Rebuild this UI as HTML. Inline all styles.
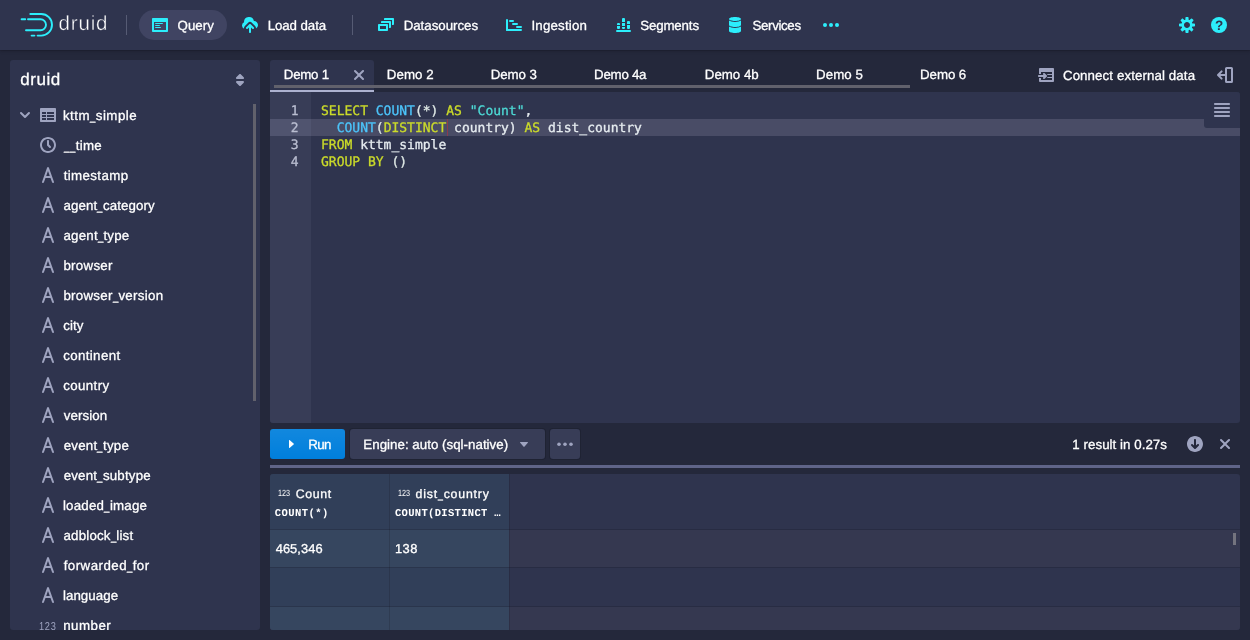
<!DOCTYPE html>
<html lang="en"><head><meta charset="utf-8"><title>Apache Druid</title>
<style>
html,body{margin:0;padding:0}
body{width:1250px;height:640px;overflow:hidden;background:#24283b;position:relative;font-family:"Liberation Sans",sans-serif;font-size:13.3px;color:#fff;text-rendering:geometricPrecision}
.t{position:absolute;white-space:pre;line-height:1;-webkit-text-stroke:0.3px currentColor}
.ic{position:absolute;display:block;overflow:visible}
.mono{font-family:"Liberation Mono",monospace;-webkit-text-stroke:0}
.u{display:inline-block;font-style:normal;width:5.700px;transform:scaleX(.72);transform-origin:0 0;letter-spacing:0}
.num{font-family:"Liberation Sans",sans-serif;-webkit-text-stroke:0}
#hdr{position:absolute;left:0;top:0;width:1250px;height:50px;background:#2f344e;box-shadow:0 0 0 1px rgba(16,18,26,.12),0 1px 3px rgba(16,18,26,.35)}
.vdiv{position:absolute;top:15px;width:1px;height:20px;background:#565b74}
#qbtn{position:absolute;left:139px;top:10px;width:88px;height:30px;border-radius:15px;background:#404462}
#side{position:absolute;left:10px;top:60px;width:250px;height:570px;border-radius:3px;background:#2f344e}
#tree{position:absolute;left:0;top:0;width:260px;height:630px;overflow:hidden}
.sb{position:absolute;background:#61616c}
#tab1{position:absolute;left:270px;top:60px;width:104px;height:32px;border-radius:3px 3px 0 0;background:#2f344e}
#tabline{position:absolute;left:270px;top:90px;width:104px;height:2px;background:#adb2d0}
#ed{position:absolute;left:270px;top:92px;width:970px;height:331px;background:#2f344e;border-radius:0 3px 3px 3px;overflow:hidden}
#gut{position:absolute;left:0;top:0;width:41px;height:331px;background:#383d57}
#al{position:absolute;left:41px;top:27px;width:929px;height:17px;background:#494c66}
#alg{position:absolute;left:0;top:27px;width:41px;height:17px;background:#50546f}
#cur{position:absolute;left:177px;top:27px;width:1px;height:17px;background:#8a3b4c}
#menu{position:absolute;left:934px;top:0;width:36px;height:36px;background:#2f344e;border-radius:0 0 0 3px}
.cl,.ln{-webkit-text-stroke:0.3px currentColor}
.cl{position:absolute;left:321px;margin:0;font-family:"DejaVu Sans Mono","Liberation Mono",monospace;font-size:13px;line-height:17px;height:17px;white-space:pre}
.ln{position:absolute;left:270px;width:28.500px;text-align:right;margin:0;font-family:"DejaVu Sans Mono","Liberation Mono",monospace;font-size:13px;line-height:17px;color:#b9bdd0}
#run{position:absolute;left:270px;top:429px;width:75px;height:30px;border-radius:3px;background:#007fdc linear-gradient(to bottom,rgba(255,255,255,.07),rgba(255,255,255,0))}
#eng{position:absolute;left:350px;top:429px;width:195px;height:30px;border-radius:3px;background:#383d57;box-shadow:0 0 0 1px rgba(16,18,26,.25)}
#more{position:absolute;left:550px;top:429px;width:30px;height:30px;border-radius:3px;background:#383d57;box-shadow:0 0 0 1px rgba(16,18,26,.25)}
#split{position:absolute;left:270px;top:465px;width:970px;height:3px;background:#5f6488}
#tbl{position:absolute;left:270px;top:474px;width:970px;height:156px;background:#2f344e;border-radius:3px;overflow:hidden}
#tbl div{position:absolute}
#tbl .hl{left:0;top:0;width:239px;height:156px;background:#313f59}
#tbl .r1{left:0;top:56px;width:970px;height:37px;background:#353850}
#tbl .r1h{left:0;top:56px;width:239px;height:37px;background:#36465f}
#tbl .r3{left:0;top:133px;width:970px;height:23px;background:#353850}
#tbl .r3h{left:0;top:133px;width:239px;height:23px;background:#36465f}
#tbl .hb{left:0;width:970px;height:1px;background:rgba(18,20,32,.22)}
#tbl .vb{top:0;width:1px;height:156px;background:rgba(18,20,32,.2)}
.logo{-webkit-text-stroke:0.4px #2f344e}
#w{position:absolute;left:0;top:0;width:1250px;height:640px;will-change:transform}
</style></head>
<body>
<div id="w">
<div id="hdr"></div>
<svg class="ic" style="left:16px;top:8px" width="44" height="34" viewBox="0 0 44 34"><g fill="none" stroke="#2ceefb" stroke-width="1.9" stroke-linecap="round"><path d="M14.3,6 H25.2 A10.8,10.8 0 0 1 25.2,27.6 H21.6"/><path d="M15.6,27.6 H18.4"/><path d="M12,11.3 H24.5 A5.5,5.5 0 0 1 24.5,22.3 H10"/><path d="M5.6,11.3 H9.2"/></g></svg>
<span id="t1" class="t logo" style="left:58.50px;top:14.19px;font-size:20.5px;color:#fff;letter-spacing:0.860px;">druid</span>
<div class="vdiv" style="left:126px"></div><div class="vdiv" style="left:352px"></div>
<div id="qbtn"></div>
<svg class="ic" style="left:152px;top:17px" width="16" height="16" viewBox="0 0 16 16"><path fill="#2ceefb" fill-rule="evenodd" d="M3.5 7h7c.28 0 .5-.22.5-.5s-.22-.5-.5-.5h-7c-.28 0-.5.22-.5.5s.22.5.5.5zM15 1H1c-.55 0-1 .45-1 1v12c0 .55.45 1 1 1h14c.55 0 1-.45 1-1V2c0-.55-.45-1-1-1zm-1 12H2V5h12v8zM3.5 9h4c.28 0 .5-.22.5-.5S7.78 8 7.5 8h-4c-.28 0-.5.22-.5.5s.22.5.5.5zm0 2h5c.28 0 .5-.22.5-.5s-.22-.5-.5-.5h-5c-.28 0-.5.22-.5.5s.22.5.5.5z"/></svg>
<span id="t2" class="t " style="left:177.53px;top:18.71px;font-size:13.3px;color:#fff;letter-spacing:0.018px;">Query</span>
<svg class="ic" style="left:242px;top:17px" width="16" height="16" viewBox="0 0 16 16"><path fill="#2ceefb" fill-rule="evenodd" d="M8.71 7.29C8.53 7.11 8.28 7 8 7s-.53.11-.71.29l-3 3a1.003 1.003 0 001.42 1.42L7 10.41V15c0 .55.45 1 1 1s1-.45 1-1v-4.59l1.29 1.29c.18.19.43.3.71.3a1.003 1.003 0 00.71-1.71l-3-3zM12 4c-.03 0-.07 0-.1.01A5 5 0 002 5c0 .11.01.22.02.33a3.495 3.495 0 00.07 6.37c-.05-.23-.09-.46-.09-.7 0-.83.34-1.58.88-2.12l3-3a2.993 2.993 0 014.24 0l3 3c.54.54.88 1.29.88 2.12 0 .16-.02.32-.05.47C15.17 10.78 16 9.5 16 8c0-2.21-1.79-4-4-4z"/></svg>
<span id="t3" class="t " style="left:267.68px;top:18.60px;font-size:13.3px;color:#fff;letter-spacing:-0.086px;">Load data</span>
<svg class="ic" style="left:378px;top:17px" width="16" height="16" viewBox="0 0 16 16"><path fill="#2ceefb" fill-rule="evenodd" d="M12 3.98H4c-.55 0-1 .45-1 1v1h8v5h1c.55 0 1-.45 1-1v-5c0-.55-.45-1-1-1zm3-3H7c-.55 0-1 .45-1 1v1h8v5h1c.55 0 1-.45 1-1v-5c0-.55-.45-1-1-1zm-6 6H1c-.55 0-1 .45-1 1v5c0 .55.45 1 1 1h8c.55 0 1-.45 1-1v-5c0-.55-.45-1-1-1zm-1 5H2v-3h6v3z"/></svg>
<span id="t4" class="t " style="left:403.63px;top:18.60px;font-size:13.3px;color:#fff;letter-spacing:-0.016px;">Datasources</span>
<svg class="ic" style="left:506px;top:17px" width="16" height="16" viewBox="0 0 16 16"><g fill="#2ceefb"><rect x="0" y="2" width="2" height="12" rx="1"/><rect x="0" y="12" width="16" height="2" rx="1"/><rect x="3" y="3" width="5" height="2" rx="1"/><rect x="6" y="6" width="6" height="2" rx="1"/><rect x="10" y="9" width="6" height="2" rx="1"/></g></svg>
<span id="t5" class="t " style="left:531.45px;top:18.65px;font-size:13.3px;color:#fff;letter-spacing:0.198px;">Ingestion</span>
<svg class="ic" style="left:615px;top:17px" width="16" height="16" viewBox="0 0 16 16"><path fill="#2ceefb" d="M2 8V7a1 1 0 0 1 1 -1H4a1 1 0 0 1 1 1V8z M2 9V11a1 1 0 0 0 1 1H4a1 1 0 0 0 1 -1V9z M7 5V2a1 1 0 0 1 1 -1H9a1 1 0 0 1 1 1V5z M7 6h3v3h-3z M7 10V11a1 1 0 0 0 1 1H9a1 1 0 0 0 1 -1V10z M12 7V5a1 1 0 0 1 1 -1H14a1 1 0 0 1 1 1V7z M12 8V11a1 1 0 0 0 1 1H14a1 1 0 0 0 1 -1V8z"/><rect x="1" y="13" width="15" height="2" rx="1" fill="#2ceefb"/></svg>
<span id="t6" class="t " style="left:640.18px;top:18.60px;font-size:13.3px;color:#fff;letter-spacing:-0.144px;">Segments</span>
<svg class="ic" style="left:727px;top:17px" width="16" height="16" viewBox="0 0 16 16"><path fill="#2ceefb" fill-rule="evenodd" d="M8 4c3.31 0 6-.9 6-2s-2.69-2-6-2C4.68 0 2 .9 2 2s2.68 2 6 2zm-6-.48V8c0 1.1 2.69 2 6 2s6-.9 6-2V3.52C12.78 4.4 10.56 5 8 5s-4.78-.6-6-1.48zm0 6V14c0 1.1 2.69 2 6 2s6-.9 6-2V9.520C12.78 10.4 10.56 11 8 11s-4.78-.6-6-1.48z"/></svg>
<span id="t7" class="t " style="left:752.54px;top:18.60px;font-size:13.3px;color:#fff;letter-spacing:-0.355px;">Services</span>
<svg class="ic" style="left:823px;top:17px" width="16" height="16" viewBox="0 0 16 16"><g fill="#2ceefb"><circle cx="2" cy="8" r="2"/><circle cx="8" cy="8" r="2"/><circle cx="14" cy="8" r="2"/></g></svg>
<svg class="ic" style="left:1179px;top:17px" width="16" height="16" viewBox="0 0 16 16"><path fill="#2ceefb" fill-rule="evenodd" d="M15.19 6.39h-1.85c-.11-.37-.27-.71-.45-1.040l1.36-1.36c.31-.31.31-.82 0-1.13l-1.13-1.13a.803.803 0 00-1.13 0l-1.36 1.36c-.33-.17-.67-.33-1.040-.44V.79c0-.44-.36-.8-.8-.8h-1.600c-.44 0-.8.36-.8.8v1.860c-.39.12-.75.28-1.100.47l-1.300-1.300c-.3-.3-.79-.3-1.090 0L1.820 2.910c-.3.3-.3.79 0 1.090l1.300 1.300c-.2.340-.36.7-.48 1.090H.79c-.44 0-.8.36-.8.8v1.600c0 .44.36.8.8.8h1.850c.11.37.27.71.45 1.040l-1.360 1.360c-.31.31-.31.82 0 1.130l1.130 1.130c.31.31.82.31 1.130 0l1.360-1.360c.33.18.67.33 1.040.44v1.860c0 .44.36.8.8.8h1.600c.44 0 .8-.36.8-.8v-1.860c.39-.12.75-.28 1.100-.47l1.300 1.300c.3.3.79.3 1.090 0l1.090-1.090c.3-.3.3-.79 0-1.090l-1.300-1.300c.19-.35.36-.71.48-1.100h1.850c.44 0 .8-.36.8-.8v-1.600a.816.816 0 00-.81-.79zm-7.200 4.600c-1.660 0-3-1.340-3-3s1.340-3 3-3 3 1.340 3 3-1.340 3-3 3z"/></svg>
<svg class="ic" style="left:1211px;top:17px" width="16" height="16" viewBox="0 0 16 16"><circle cx="8" cy="8" r="8" fill="#2ceefb"/><text x="8" y="12.800" text-anchor="middle" font-family="Liberation Sans, sans-serif" font-weight="bold" font-size="13.5" fill="#2f344e">?</text></svg>
<div id="side"></div>
<span id="t8" class="t " style="left:20.31px;top:71.47px;font-size:17px;color:#fff;letter-spacing:0.518px;">druid</span>
<svg class="ic" style="left:232px;top:72px" width="16" height="16" viewBox="0 0 16 16"><path fill="#9fa4c0" fill-rule="evenodd" d="M5 7h6a1.003 1.003 0 00.71-1.710l-3-3C8.530 2.110 8.280 2 8 2s-.53.11-.71.29l-3 3A1.003 1.003 0 005 7zm6 2H5a1.003 1.003 0 00-.71 1.710l3 3c.18.18.43.29.71.29s.53-.11.71-.29l3-3A1.003 1.003 0 0011 9z"/></svg>
<div class="sb" style="left:253px;top:104px;width:3px;height:297px"></div>
<svg class="ic" style="left:17px;top:107px" width="16" height="16" viewBox="0 0 16 16"><path fill="#9fa4c0" fill-rule="evenodd" d="M12 5c-.28 0-.53.11-.71.29L8 8.59l-3.290-3.300a1.003 1.003 0 00-1.420 1.420l4 4c.18.18.43.29.71.29s.53-.11.71-.29l4-4A1.003 1.003 0 0012 5z"/></svg>
<svg class="ic" style="left:40px;top:107px" width="16" height="16" viewBox="0 0 16 16"><path fill="#9fa4c0" fill-rule="evenodd" d="M15 1H1c-.6 0-1 .5-1 1v12c0 .6.4 1 1 1h14c.6 0 1-.4 1-1V2c0-.5-.4-1-1-1zM6 13H2v-2h4v2zm0-3H2V8h4v2zm0-3H2V5h4v2zm8 6H7v-2h7v2zm0-3H7V8h7v2zm0-3H7V5h7v2z"/></svg>
<div id="tree">
<span id="t9" class="t " style="left:62.93px;top:108.74px;font-size:13.3px;color:#fff;letter-spacing:0.503px;">kttm<i class="u">_</i>simple</span>
<svg class="ic" style="left:40px;top:137px" width="16" height="16" viewBox="0 0 16 16"><path fill="#9fa4c0" fill-rule="evenodd" d="M8 0C3.58 0 0 3.58 0 8s3.58 8 8 8 8-3.580 8-8-3.580-8-8-8zm0 14c-3.310 0-6-2.690-6-6s2.690-6 6-6 6 2.690 6 6-2.690 6-6 6zm1-6.410V4c0-.55-.45-1-1-1s-1 .45-1 1v4c0 .28.11.53.29.71l2 2a1.003 1.003 0 001.420-1.420L9 7.590z"/></svg>
<span id="t10" class="t " style="left:64.30px;top:138.61px;font-size:13.3px;color:#fff;letter-spacing:0.293px;"><i class="u">_</i><i class="u">_</i>time</span>
<svg class="ic" style="left:40px;top:167px" width="16" height="16" viewBox="0 0 16 16"><path fill="#9fa4c0" fill-rule="evenodd" d="M13.93 14.67L8.94.67h-.01C8.790.28 8.430 0 8 0s-.79.28-.93.67h-.01l-5 14h.01c-.04.1-.07.21-.07.33 0 .55.45 1 1 1 .43 0 .79-.28.93-.67h.01L5.490 11h5.020l1.550 4.340h.01c.14.38.5.66.93.66.55 0 1-.45 1-1 0-.12-.03-.23-.07-.33zM6.200 9L8 3.970 9.800 9H6.200z"/></svg>
<span id="t11" class="t " style="left:63.66px;top:168.60px;font-size:13.3px;color:#fff;letter-spacing:0.381px;">timestamp</span>
<svg class="ic" style="left:40px;top:197px" width="16" height="16" viewBox="0 0 16 16"><path fill="#9fa4c0" fill-rule="evenodd" d="M13.93 14.67L8.94.67h-.01C8.790.28 8.430 0 8 0s-.79.28-.93.67h-.01l-5 14h.01c-.04.1-.07.21-.07.33 0 .55.45 1 1 1 .43 0 .79-.28.93-.67h.01L5.490 11h5.020l1.550 4.340h.01c.14.38.5.66.93.66.55 0 1-.45 1-1 0-.12-.03-.23-.07-.33zM6.200 9L8 3.970 9.800 9H6.200z"/></svg>
<span id="t12" class="t " style="left:63.54px;top:198.60px;font-size:13.3px;color:#fff;letter-spacing:0.086px;">agent<i class="u">_</i>category</span>
<svg class="ic" style="left:40px;top:227px" width="16" height="16" viewBox="0 0 16 16"><path fill="#9fa4c0" fill-rule="evenodd" d="M13.93 14.67L8.94.67h-.01C8.790.28 8.430 0 8 0s-.79.28-.93.67h-.01l-5 14h.01c-.04.1-.07.21-.07.33 0 .55.45 1 1 1 .43 0 .79-.28.93-.67h.01L5.490 11h5.020l1.550 4.340h.01c.14.38.5.66.93.66.55 0 1-.45 1-1 0-.12-.03-.23-.07-.33zM6.200 9L8 3.970 9.800 9H6.200z"/></svg>
<span id="t13" class="t " style="left:63.54px;top:228.60px;font-size:13.3px;color:#fff;letter-spacing:0.196px;">agent<i class="u">_</i>type</span>
<svg class="ic" style="left:40px;top:257px" width="16" height="16" viewBox="0 0 16 16"><path fill="#9fa4c0" fill-rule="evenodd" d="M13.93 14.67L8.94.67h-.01C8.790.28 8.430 0 8 0s-.79.28-.93.67h-.01l-5 14h.01c-.04.1-.07.21-.07.33 0 .55.45 1 1 1 .43 0 .79-.28.93-.67h.01L5.490 11h5.020l1.550 4.340h.01c.14.38.5.66.93.66.55 0 1-.45 1-1 0-.12-.03-.23-.07-.33zM6.200 9L8 3.970 9.800 9H6.200z"/></svg>
<span id="t14" class="t " style="left:63.38px;top:258.60px;font-size:13.3px;color:#fff;letter-spacing:0.296px;">browser</span>
<svg class="ic" style="left:40px;top:287px" width="16" height="16" viewBox="0 0 16 16"><path fill="#9fa4c0" fill-rule="evenodd" d="M13.93 14.67L8.94.67h-.01C8.790.28 8.430 0 8 0s-.79.28-.93.67h-.01l-5 14h.01c-.04.1-.07.21-.07.33 0 .55.45 1 1 1 .43 0 .79-.28.93-.67h.01L5.490 11h5.020l1.550 4.340h.01c.14.38.5.66.93.66.55 0 1-.45 1-1 0-.12-.03-.23-.07-.33zM6.200 9L8 3.970 9.800 9H6.200z"/></svg>
<span id="t15" class="t " style="left:63.38px;top:288.62px;font-size:13.3px;color:#fff;letter-spacing:0.293px;">browser<i class="u">_</i>version</span>
<svg class="ic" style="left:40px;top:317px" width="16" height="16" viewBox="0 0 16 16"><path fill="#9fa4c0" fill-rule="evenodd" d="M13.93 14.67L8.94.67h-.01C8.790.28 8.430 0 8 0s-.79.28-.93.67h-.01l-5 14h.01c-.04.1-.07.21-.07.33 0 .55.45 1 1 1 .43 0 .79-.28.93-.67h.01L5.490 11h5.020l1.550 4.340h.01c.14.38.5.66.93.66.55 0 1-.45 1-1 0-.12-.03-.23-.07-.33zM6.200 9L8 3.970 9.800 9H6.200z"/></svg>
<span id="t16" class="t " style="left:63.18px;top:318.60px;font-size:13.3px;color:#fff;letter-spacing:0.080px;">city</span>
<svg class="ic" style="left:40px;top:347px" width="16" height="16" viewBox="0 0 16 16"><path fill="#9fa4c0" fill-rule="evenodd" d="M13.93 14.67L8.94.67h-.01C8.790.28 8.430 0 8 0s-.79.28-.93.67h-.01l-5 14h.01c-.04.1-.07.21-.07.33 0 .55.45 1 1 1 .43 0 .79-.28.93-.67h.01L5.490 11h5.020l1.550 4.340h.01c.14.38.5.66.93.66.55 0 1-.45 1-1 0-.12-.03-.23-.07-.33zM6.200 9L8 3.970 9.800 9H6.200z"/></svg>
<span id="t17" class="t " style="left:63.18px;top:348.78px;font-size:13.3px;color:#fff;letter-spacing:0.373px;">continent</span>
<svg class="ic" style="left:40px;top:377px" width="16" height="16" viewBox="0 0 16 16"><path fill="#9fa4c0" fill-rule="evenodd" d="M13.93 14.67L8.94.67h-.01C8.790.28 8.430 0 8 0s-.79.28-.93.67h-.01l-5 14h.01c-.04.1-.07.21-.07.33 0 .55.45 1 1 1 .43 0 .79-.28.93-.67h.01L5.490 11h5.020l1.550 4.340h.01c.14.38.5.66.93.66.55 0 1-.45 1-1 0-.12-.03-.23-.07-.33zM6.200 9L8 3.970 9.800 9H6.200z"/></svg>
<span id="t18" class="t " style="left:63.18px;top:378.92px;font-size:13.3px;color:#fff;letter-spacing:0.397px;">country</span>
<svg class="ic" style="left:40px;top:407px" width="16" height="16" viewBox="0 0 16 16"><path fill="#9fa4c0" fill-rule="evenodd" d="M13.93 14.67L8.94.67h-.01C8.790.28 8.430 0 8 0s-.79.28-.93.67h-.01l-5 14h.01c-.04.1-.07.21-.07.33 0 .55.45 1 1 1 .43 0 .79-.28.93-.67h.01L5.490 11h5.020l1.550 4.340h.01c.14.38.5.66.93.66.55 0 1-.45 1-1 0-.12-.03-.23-.07-.33zM6.200 9L8 3.970 9.800 9H6.200z"/></svg>
<span id="t19" class="t " style="left:63.65px;top:408.60px;font-size:13.3px;color:#fff;letter-spacing:0.124px;">version</span>
<svg class="ic" style="left:40px;top:437px" width="16" height="16" viewBox="0 0 16 16"><path fill="#9fa4c0" fill-rule="evenodd" d="M13.93 14.67L8.94.67h-.01C8.790.28 8.430 0 8 0s-.79.28-.93.67h-.01l-5 14h.01c-.04.1-.07.21-.07.33 0 .55.45 1 1 1 .43 0 .79-.28.93-.67h.01L5.490 11h5.020l1.550 4.340h.01c.14.38.5.66.93.66.55 0 1-.45 1-1 0-.12-.03-.23-.07-.33zM6.200 9L8 3.970 9.800 9H6.200z"/></svg>
<span id="t20" class="t " style="left:63.66px;top:438.62px;font-size:13.3px;color:#fff;letter-spacing:0.229px;">event<i class="u">_</i>type</span>
<svg class="ic" style="left:40px;top:467px" width="16" height="16" viewBox="0 0 16 16"><path fill="#9fa4c0" fill-rule="evenodd" d="M13.93 14.67L8.94.67h-.01C8.790.28 8.430 0 8 0s-.79.28-.93.67h-.01l-5 14h.01c-.04.1-.07.21-.07.33 0 .55.45 1 1 1 .43 0 .79-.28.93-.67h.01L5.490 11h5.020l1.550 4.340h.01c.14.38.5.66.93.66.55 0 1-.45 1-1 0-.12-.03-.23-.07-.33zM6.200 9L8 3.970 9.800 9H6.200z"/></svg>
<span id="t21" class="t " style="left:63.66px;top:468.62px;font-size:13.3px;color:#fff;letter-spacing:0.199px;">event<i class="u">_</i>subtype</span>
<svg class="ic" style="left:40px;top:497px" width="16" height="16" viewBox="0 0 16 16"><path fill="#9fa4c0" fill-rule="evenodd" d="M13.93 14.67L8.94.67h-.01C8.790.28 8.430 0 8 0s-.79.28-.93.67h-.01l-5 14h.01c-.04.1-.07.21-.07.33 0 .55.45 1 1 1 .43 0 .79-.28.93-.67h.01L5.490 11h5.020l1.550 4.340h.01c.14.38.5.66.93.66.55 0 1-.45 1-1 0-.12-.03-.23-.07-.33zM6.200 9L8 3.970 9.800 9H6.200z"/></svg>
<span id="t22" class="t " style="left:62.93px;top:498.62px;font-size:13.3px;color:#fff;letter-spacing:0.223px;">loaded<i class="u">_</i>image</span>
<svg class="ic" style="left:40px;top:527px" width="16" height="16" viewBox="0 0 16 16"><path fill="#9fa4c0" fill-rule="evenodd" d="M13.93 14.67L8.94.67h-.01C8.790.28 8.430 0 8 0s-.79.28-.93.67h-.01l-5 14h.01c-.04.1-.07.21-.07.33 0 .55.45 1 1 1 .43 0 .79-.28.93-.67h.01L5.490 11h5.020l1.550 4.340h.01c.14.38.5.66.93.66.55 0 1-.45 1-1 0-.12-.03-.23-.07-.33zM6.200 9L8 3.970 9.800 9H6.200z"/></svg>
<span id="t23" class="t " style="left:63.54px;top:528.60px;font-size:13.3px;color:#fff;letter-spacing:0.181px;">adblock<i class="u">_</i>list</span>
<svg class="ic" style="left:40px;top:557px" width="16" height="16" viewBox="0 0 16 16"><path fill="#9fa4c0" fill-rule="evenodd" d="M13.93 14.67L8.94.67h-.01C8.790.28 8.430 0 8 0s-.79.28-.93.67h-.01l-5 14h.01c-.04.1-.07.21-.07.33 0 .55.45 1 1 1 .43 0 .79-.28.93-.67h.01L5.490 11h5.020l1.550 4.340h.01c.14.38.5.66.93.66.55 0 1-.45 1-1 0-.12-.03-.23-.07-.33zM6.200 9L8 3.970 9.800 9H6.200z"/></svg>
<span id="t24" class="t " style="left:63.63px;top:558.60px;font-size:13.3px;color:#fff;letter-spacing:0.471px;">forwarded<i class="u">_</i>for</span>
<svg class="ic" style="left:40px;top:587px" width="16" height="16" viewBox="0 0 16 16"><path fill="#9fa4c0" fill-rule="evenodd" d="M13.93 14.67L8.94.67h-.01C8.790.28 8.430 0 8 0s-.79.28-.93.67h-.01l-5 14h.01c-.04.1-.07.21-.07.33 0 .55.45 1 1 1 .43 0 .79-.28.93-.67h.01L5.490 11h5.020l1.550 4.340h.01c.14.38.5.66.93.66.55 0 1-.45 1-1 0-.12-.03-.23-.07-.33zM6.200 9L8 3.970 9.800 9H6.200z"/></svg>
<span id="t25" class="t " style="left:62.93px;top:588.60px;font-size:13.3px;color:#fff;letter-spacing:0.062px;">language</span>
<span id="t26" class="t num" style="left:39.40px;top:621.91px;font-size:11.5px;color:#9fa4c0;letter-spacing:0.884px;transform:scaleX(0.8);transform-origin:0 0;">123</span>
<span id="t27" class="t " style="left:63.21px;top:618.81px;font-size:13.3px;color:#fff;letter-spacing:0.490px;">number</span>
</div>
<div id="tab1"></div><div id="tabline"></div><div class="sb" style="left:274px;top:85px;width:636px;height:3px"></div>
<span id="t28" class="t " style="left:283.82px;top:67.60px;font-size:13.3px;color:#fff;letter-spacing:-0.267px;">Demo 1</span>
<span id="t29" class="t " style="left:386.82px;top:67.60px;font-size:13.3px;color:#fff;letter-spacing:0.038px;">Demo 2</span>
<span id="t30" class="t " style="left:490.73px;top:67.62px;font-size:13.3px;color:#fff;letter-spacing:-0.058px;">Demo 3</span>
<span id="t31" class="t " style="left:594.10px;top:67.60px;font-size:13.3px;color:#fff;letter-spacing:-0.256px;">Demo 4a</span>
<span id="t32" class="t " style="left:704.82px;top:67.60px;font-size:13.3px;color:#fff;letter-spacing:-0.020px;">Demo 4b</span>
<span id="t33" class="t " style="left:816.10px;top:67.74px;font-size:13.3px;color:#fff;letter-spacing:0.069px;">Demo 5</span>
<span id="t34" class="t " style="left:920.10px;top:67.60px;font-size:13.3px;color:#fff;letter-spacing:-0.078px;">Demo 6</span>
<svg class="ic" style="left:351px;top:67px" width="16" height="16" viewBox="0 0 16 16"><path fill="#9fa4c0" fill-rule="evenodd" d="M9.410 8l3.290-3.290c.19-.18.3-.43.3-.71a1.003 1.003 0 00-1.710-.71L8 6.590l-3.290-3.300a1.003 1.003 0 00-1.420 1.420L6.590 8 3.300 11.290c-.19.18-.3.43-.3.71a1.003 1.003 0 001.710.71L8 9.410l3.290 3.290c.18.19.43.3.71.3a1.003 1.003 0 00.71-1.710L9.410 8z"/></svg>
<svg class="ic" style="left:1038px;top:67px" width="16" height="16" viewBox="0 0 16 16"><path fill="#9fa4c0" fill-rule="evenodd" d="M5.6 10l-.3.3c-.2.2-.3.4-.3.7 0 .6.4 1 1 1 .3 0 .5-.1.7-.3l2-2c.2-.2.3-.4.3-.7s-.1-.5-.3-.7l-2-2C6.500 6.100 6.300 6 6 6c-.6 0-1 .4-1 1 0 .3.1.5.3.7l.3.3H1c-.6 0-1 .4-1 1s.4 1 1 1h4.600zM15 1H2c-.5 0-1 .5-1 1v5h2V5h11v2H8.800l.7.7c.1.1.1.2.2.3H14v2H9.700c-.1.1-.1.2-.2.3l-.7.7H14v2H3v-2H1v3c0 .5.5 1 1 1h13c.6 0 1-.5 1-1V2c0-.5-.4-1-1-1z"/></svg>
<span id="t35" class="t " style="left:1062.93px;top:68.60px;font-size:13.3px;color:#fff;letter-spacing:0.101px;">Connect external data</span>
<svg class="ic" style="left:1217px;top:67px" width="16" height="16" viewBox="0 0 16 16"><rect x="9" y="1" width="6" height="14" rx="0.6" fill="none" stroke="#9fa4c0" stroke-width="2"/><path d="M8 8H1.400M4.600 4.400L1 8l3.600 3.600" fill="none" stroke="#9fa4c0" stroke-width="2" stroke-linecap="round" stroke-linejoin="round"/></svg>
<div id="ed"><div id="gut"></div><div id="al"></div><div id="alg"></div><div id="cur"></div><div id="menu"></div></div>
<svg class="ic" style="left:1214px;top:102px" width="16" height="16" viewBox="0 0 16 16"><path fill="#9fa4c0" fill-rule="evenodd" d="M15 12.980H1c-.55 0-1 .45-1 1s.45 1 1 1h14c.55 0 1-.45 1-1s-.45-1-1-1zM1 2.980h14c.55 0 1-.45 1-1s-.45-1-1-1H1c-.55 0-1 .45-1 1s.45 1 1 1zm14 2H1c-.55 0-1 .45-1 1s.45 1 1 1h14c.55 0 1-.45 1-1s-.45-1-1-1zm0 4H1c-.55 0-1 .45-1 1s.45 1 1 1h14c.55 0 1-.45 1-1s-.45-1-1-1z"/></svg>
<pre class="cl" style="top:103px"><span style="color:#cbdb2a">SELECT</span><span style="color:#e6ecf0"> </span><span style="color:#4cc4fa">COUNT</span><span style="color:#dfe9e6">(*) </span><span style="color:#cbdb2a">AS</span><span style="color:#e6ecf0"> </span><span style="color:#4dd9d5">"Count"</span><span style="color:#e6ecf0">,</span></pre>
<pre class="cl" style="top:120px"><span style="color:#e6ecf0">  </span><span style="color:#4cc4fa">COUNT</span><span style="color:#dfe9e6">(</span><span style="color:#cbdb2a">DISTINCT</span><span style="color:#e6ecf0"> country) </span><span style="color:#cbdb2a">AS</span><span style="color:#e6ecf0"> dist_country</span></pre>
<pre class="cl" style="top:137px"><span style="color:#cbdb2a">FROM</span><span style="color:#e6ecf0"> kttm_simple</span></pre>
<pre class="cl" style="top:154px"><span style="color:#cbdb2a">GROUP</span><span style="color:#e6ecf0"> </span><span style="color:#cbdb2a">BY</span><span style="color:#dfe9e6"> ()</span></pre>
<pre class="ln" style="top:103px">1</pre>
<pre class="ln" style="top:120px">2</pre>
<pre class="ln" style="top:137px">3</pre>
<pre class="ln" style="top:154px">4</pre>
<div id="run"></div><div id="eng"></div><div id="more"></div>
<svg class="ic" style="left:283px;top:436px" width="16" height="16" viewBox="0 0 16 16"><path fill="#fff" fill-rule="evenodd" d="M11 8c0-.15-.07-.28-.17-.37l-4-3.500A.495.495 0 006 4.500v7a.495.495 0 00.83.37l4-3.500c.1-.09.17-.22.17-.37z"/></svg>
<span id="t36" class="t " style="left:308.31px;top:437.73px;font-size:13.3px;color:#fff;letter-spacing:-0.588px;">Run</span>
<span id="t37" class="t " style="left:363.34px;top:437.60px;font-size:13.3px;color:#fff;letter-spacing:0.028px;">Engine: auto (sql-native)</span>
<svg class="ic" style="left:516px;top:436px" width="16" height="16" viewBox="0 0 16 16"><path fill="#9fa4c0" fill-rule="evenodd" d="M12 6.500c0-.28-.22-.5-.5-.5h-7a.495.495 0 00-.37.83l3.500 4c.09.1.22.17.37.17s.28-.07.37-.17l3.500-4c.08-.09.13-.2.13-.33z"/></svg>
<svg class="ic" style="left:557px;top:436px" width="16" height="16" viewBox="0 0 16 16"><g fill="#9fa4c0"><circle cx="2" cy="8.200" r="1.800"/><circle cx="8" cy="8.200" r="1.800"/><circle cx="14" cy="8.200" r="1.800"/></g></svg>
<span id="t38" class="t " style="left:1072.37px;top:437.60px;font-size:13.3px;color:#fff;letter-spacing:0.045px;">1 result in 0.27s</span>
<svg class="ic" style="left:1187px;top:436px" width="16" height="16" viewBox="0 0 16 16"><path fill="#9fa4c0" fill-rule="evenodd" d="M7.990-.01c-4.420 0-8 3.580-8 8s3.580 8 8 8 8-3.580 8-8-3.580-8-8-8zM11.700 9.700l-3 3c-.18.18-.43.29-.71.29s-.53-.11-.71-.29l-3-3A1.003 1.003 0 015.700 8.280l1.290 1.290V3.990c0-.55.45-1 1-1s1 .45 1 1v5.590l1.290-1.290a1.003 1.003 0 011.710.71c0 .27-.11.52-.29.7z"/></svg>
<svg class="ic" style="left:1217px;top:436px" width="16" height="16" viewBox="0 0 16 16"><path fill="#9fa4c0" fill-rule="evenodd" d="M9.410 8l3.290-3.290c.19-.18.3-.43.3-.71a1.003 1.003 0 00-1.710-.71L8 6.590l-3.290-3.300a1.003 1.003 0 00-1.420 1.420L6.590 8 3.300 11.290c-.19.18-.3.43-.3.71a1.003 1.003 0 001.710.71L8 9.410l3.290 3.290c.18.19.43.3.71.3a1.003 1.003 0 00.71-1.710L9.410 8z"/></svg>
<div id="split"></div>
<div id="tbl"><div class="hl"></div><div class="r1"></div><div class="r1h"></div><div class="r3"></div><div class="r3h"></div><div class="hb" style="top:55px"></div><div class="hb" style="top:93px"></div><div class="hb" style="top:132px"></div><div class="vb" style="left:119px"></div><div class="vb" style="left:239px"></div></div>
<span id="t39" class="t num" style="left:278.20px;top:489.04px;font-size:9px;color:#fff;letter-spacing:0.004px;transform:scaleX(0.8);transform-origin:0 0;">123</span>
<span id="t40" class="t " style="left:295.83px;top:488.15px;font-size:12.3px;color:#fff;letter-spacing:0.638px;">Count</span>
<span id="t41" class="t num" style="left:398.20px;top:489.04px;font-size:9px;color:#fff;letter-spacing:0.004px;transform:scaleX(0.8);transform-origin:0 0;">123</span>
<span id="t42" class="t " style="left:415.52px;top:488.15px;font-size:12.3px;color:#fff;letter-spacing:0.825px;">dist<i class="u">_</i>country</span>
<span id="t43" class="t mono" style="left:274.66px;top:509.30px;font-size:10.5px;color:#fff;letter-spacing:0.461px;font-weight:bold;">COUNT(*)</span>
<span id="t44" class="t mono" style="left:394.88px;top:509.30px;font-size:10.5px;color:#fff;letter-spacing:0.332px;font-weight:bold;">COUNT(DISTINCT …</span>
<span id="t45" class="t " style="left:275.70px;top:542.92px;font-size:12.9px;color:#fff;letter-spacing:0.048px;">465,346</span>
<span id="t46" class="t " style="left:395.04px;top:543.00px;font-size:12.9px;color:#fff;letter-spacing:0.384px;">138</span>
<div class="sb" style="left:1233px;top:533px;width:3px;height:12px;background:#74747f"></div>
</div>
</body></html>
